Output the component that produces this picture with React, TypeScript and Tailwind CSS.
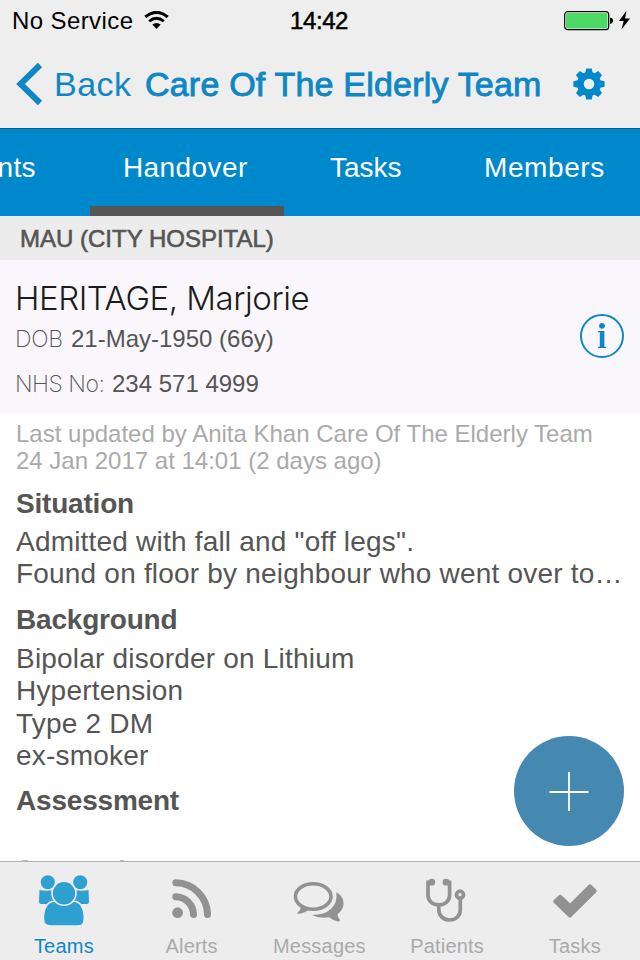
import type { ReactNode } from "react";

const tabs = [
  { label: "Patients", className: "w-[90px] pr-[54px] justify-end tracking-[0.4px]" },
  { label: "Handover", className: "w-[194px] pl-[33px] tracking-[0.4px]" },
  { label: "Tasks", className: "w-[154px] pl-[46px]" },
  { label: "Members", className: "w-[202px] pl-[46px] tracking-[0.6px]" },
];

const notes = [
  {
    title: "Situation",
    titleClass: "mt-[14px] h-[38px]",
    lines: [
      'Admitted with fall and "off legs".',
      "Found on floor by neighbour who went over to…",
    ],
  },
  {
    title: "Background",
    titleClass: "mt-[13px] h-[39px]",
    lines: ["Bipolar disorder on Lithium", "Hypertension", "Type 2 DM", "ex-smoker"],
  },
  { title: "Assessment", titleClass: "mt-[13px] h-[39px]", lines: [] },
];

function StatusBar() {
  return (
    <div className="flex h-[42px] text-2xl leading-[42px] text-black">
      <div className="flex w-[290px] pl-[12px]">
        <span className="w-[132px] tracking-[0.4px]">No Service</span>
        <svg className="mt-[11px]" width="25" height="19" viewBox="0 0 25 19">
          <path d="M1.3 6Q12.5 -3.2 23.7 6" fill="none" stroke="#000" strokeWidth="3.2" />
          <path d="M5.2 10.3Q12.5 4.2 19.8 10.3" fill="none" stroke="#000" strokeWidth="2.8" />
          <path d="M8.3 13.6Q12.5 10.2 16.7 13.6L12.5 18Z" />
        </svg>
      </div>
      <span className="w-[274px] tracking-[-0.4px] [-webkit-text-stroke:0.5px]">
        14:42
      </span>
      <svg className="mt-[10px]" width="68" height="21" viewBox="0 0 68 21">
        <rect x="0.7" y="1.7" width="44" height="18" rx="3" fill="#fff" stroke="#000" strokeWidth="1.2" />
        <rect x="2" y="3" width="41.5" height="15.5" rx="1.5" fill="#4cd964" />
        <path d="M46 7.5Q49 8 49 10.5T46 14Z" />
        <path d="M62.5 0.8L55 11H59.7L57.5 19.5L66 8.5H61Z" />
      </svg>
    </div>
  );
}

function Gear() {
  const teeth = [0, 45, 90, 135, 180, 225, 270, 315];
  return (
    <svg width="32" height="32" viewBox="-16 -16 32 32" fill="#0088cc">
      {teeth.map((angle) => (
        <path key={angle} d="M-4.2 -9L-2.8 -15.6H2.8L4.2 -9Z" transform={`rotate(${angle})`} />
      ))}
      <circle r="8.6" fill="none" stroke="#0088cc" strokeWidth="6.6" />
    </svg>
  );
}

function NavBar() {
  return (
    <div className="flex h-[86px] items-center pb-[2px] text-[34px] leading-[84px] text-[#0f87c4]">
      <svg className="ml-[16px]" width="27" height="44" viewBox="0 0 27 44">
        <path d="M24 3L4.5 22L24 41" fill="none" stroke="#0f87c4" strokeWidth="6" />
      </svg>
      <span className="ml-[11px] w-[91px] tracking-[0.5px]">Back</span>
      <h1 className="w-[428px] whitespace-nowrap tracking-[0.2px] [-webkit-text-stroke:0.9px]">
        Care Of The Elderly Team
      </h1>
      <Gear />
    </div>
  );
}

function TopTabs() {
  return (
    <nav className="flex h-[88px] border-t border-[#06608f] bg-[#0088cc] text-[28px] leading-[77px] text-white">
      {tabs.map((tab) => (
        <div
          key={tab.label}
          className={`flex shrink-0 ${tab.className} ${
            tab.label === "Handover" ? "border-b-10 border-[#555]" : ""
          }`}
        >
          {tab.label}
        </div>
      ))}
    </nav>
  );
}

function PatientCard() {
  return (
    <section className="flex h-[154px] bg-[#f9f7fb] pl-4">
      <div className="w-[564px] pt-[16px] text-2xl text-[#555]">
        <h2 className="-ml-px h-[44px] font-[Inter] text-[33px] leading-[44px] font-light tracking-[-0.45px] text-[#1c1c1e]">
          HERITAGE, Marjorie
        </h2>
        <div className="flex h-[36px] leading-[38px]">
          <span className="-ml-px w-[56px] font-[Inter] text-[23px] font-extralight tracking-[-0.3px]">DOB</span>
          <span>21-May-1950 (66y)</span>
        </div>
        <div className="mt-[9px] flex h-[36px] leading-[38px]">
          <span className="-ml-px w-[97px] font-[Inter] text-[23px] font-extralight tracking-[-0.5px]">NHS No:</span>
          <span>234 571 4999</span>
        </div>
      </div>
      <svg className="mt-[54px]" width="44" height="44" viewBox="0 0 44 44" fill="#0f87c4">
        <circle cx="22" cy="22" r="21" fill="none" stroke="#0f87c4" strokeWidth="2" />
        <circle cx="22" cy="11.8" r="2.9" />
        <path d="M18 17H24.4V32.8H26.2V34H18V32.8H19.8V18.2H18Z" />
      </svg>
    </section>
  );
}

function Notes() {
  return (
    <section className="h-[447px] overflow-hidden pl-4 text-[28px] text-[#555]">
      <p className="pt-[6px] text-2xl leading-[27px] whitespace-nowrap text-[#aaa]">
        Last updated by Anita Khan Care Of The Elderly Team
        <br />
        24 Jan 2017 at 14:01 (2 days ago)
      </p>
      {notes.map((note) => (
        <div key={note.title} className="leading-[32.4px] whitespace-nowrap">
          <h3 className={`font-bold tracking-[-0.2px] ${note.titleClass}`}>{note.title}</h3>
          {note.lines.map((line) => (
            <p key={line} className="tracking-[0.2px]">{line}</p>
          ))}
        </div>
      ))}
    </section>
  );
}

function TabItem({ label, active, children }: { label: string; active?: boolean; children: ReactNode }) {
  return (
    <div
      className={`flex w-[127.75px] flex-col items-center pt-[11px] text-xl leading-[24px] tracking-[0.2px] ${
        active ? "text-[#0f87c4]" : "text-[#aaa]"
      }`}
    >
      <svg width="56" height="56" viewBox="0 0 56 56" fill="#929292">
        {children}
      </svg>
      <span className="mt-[5px]">{label}</span>
    </div>
  );
}

function BottomTabs() {
  return (
    <nav className="flex h-[99px] border-t border-[#b2b2b2] bg-[#ededed]">
      <TabItem label="Teams" active>
        <g fill="#309fd1">
          <circle cx="11.8" cy="9.3" r="7" />
          <circle cx="44.2" cy="9.3" r="7" />
          <path d="M3.5 17Q10 18.5 18 17V31H5Q3 31 3 29ZM52.5 17Q46 18.5 38 17V31H51Q53 31 53 29Z" />
          <g stroke="#ededed" strokeWidth="1.6">
            <path d="M18.5 28.3H37.5C45 28.3 48.3 36 48.3 45C48.3 51.5 46 53 41.5 53H14.5C10 53 7.4 51.5 7.4 45C7.4 36 11 28.3 18.5 28.3Z" />
            <circle cx="28" cy="20.3" r="12" />
          </g>
        </g>
      </TabItem>
      <TabItem label="Alerts">
        <circle cx="13.6" cy="39.7" r="5.4" />
        <g fill="none" stroke="#929292" strokeWidth="7" strokeLinecap="round">
          <path d="M11.8 23.8A18 18 0 0 1 29.5 41.5" />
          <path d="M11.8 9.8A32 32 0 0 1 43.5 41.5" />
        </g>
      </TabItem>
      <TabItem label="Messages">
        <ellipse cx="22.2" cy="23.5" rx="17.8" ry="12.7" fill="none" stroke="#929292" strokeWidth="3.6" />
        <path d="M10.5 33Q9.5 37.5 5.8 41Q13.5 40.5 19 36Z" />
        <path d="M45.3 19.3Q52.6 23.5 52.6 30.5Q52.5 36.5 46.5 41.3Q46.7 44.5 49 47Q49 48.8 47 48.4Q41.5 47.3 38 44.3Q28 45.8 20.8 42Q33.5 41.8 40 36Q46.8 29.5 45.3 19.3Z" />
      </TabItem>
      <TabItem label="Patients">
        <g fill="none" stroke="#929292" strokeWidth="3.7">
          <path d="M13 9.3H9V22C9 28.5 14 31.8 19.8 31.8S30.6 28.5 30.6 22V9.3H27" />
          <path d="M19.8 31.8V37C19.8 43 25 47 30.7 47S41.3 43 41.3 37V25.5" />
          <circle cx="41" cy="21.7" r="3.5" />
        </g>
        <circle cx="12.8" cy="9.2" r="3.4" />
        <circle cx="27" cy="9.2" r="3.4" />
      </TabItem>
      <TabItem label="Tasks">
        <path d="M6.6 29.6Q5.6 28.4 6.6 27.3L12 22.2Q13.2 21.2 14.4 22.2L23.2 30.2L41.8 11.8Q43 10.7 44.2 11.8L49.3 16.8Q50.3 18 49.3 19.2L24.2 44Q22.8 45.2 21.5 44Z" />
      </TabItem>
    </nav>
  );
}

export default function App() {
  return (
    <div className="relative h-[960px] w-[640px] overflow-hidden bg-white font-['Liberation_Sans',sans-serif]">
      <header className="bg-[#eee]">
        <StatusBar />
        <NavBar />
      </header>
      <TopTabs />
      <div className="h-[44px] bg-[#ececec] pl-[20px] text-2xl leading-[45px] text-[#555] [-webkit-text-stroke:0.6px]">
        MAU (CITY HOSPITAL)
      </div>
      <PatientCard />
      <Notes />
      <BottomTabs />
      <button className="absolute top-[736px] left-[514px] flex size-[110px] items-center justify-center rounded-full bg-[#4588b0]">
        <svg width="40" height="40" viewBox="0 0 40 40">
          <path d="M20 1V40M0.5 21H39.5" stroke="#fff" strokeWidth="1.8" />
        </svg>
      </button>
      {/* next heading, just showing above the tab bar */}
      <div className="absolute top-[860px] left-[22px] h-px w-[6px] bg-[#bbb]" />
      <div className="absolute top-[860px] left-[120px] h-px w-[4px] bg-[#bbb]" />
    </div>
  );
}
